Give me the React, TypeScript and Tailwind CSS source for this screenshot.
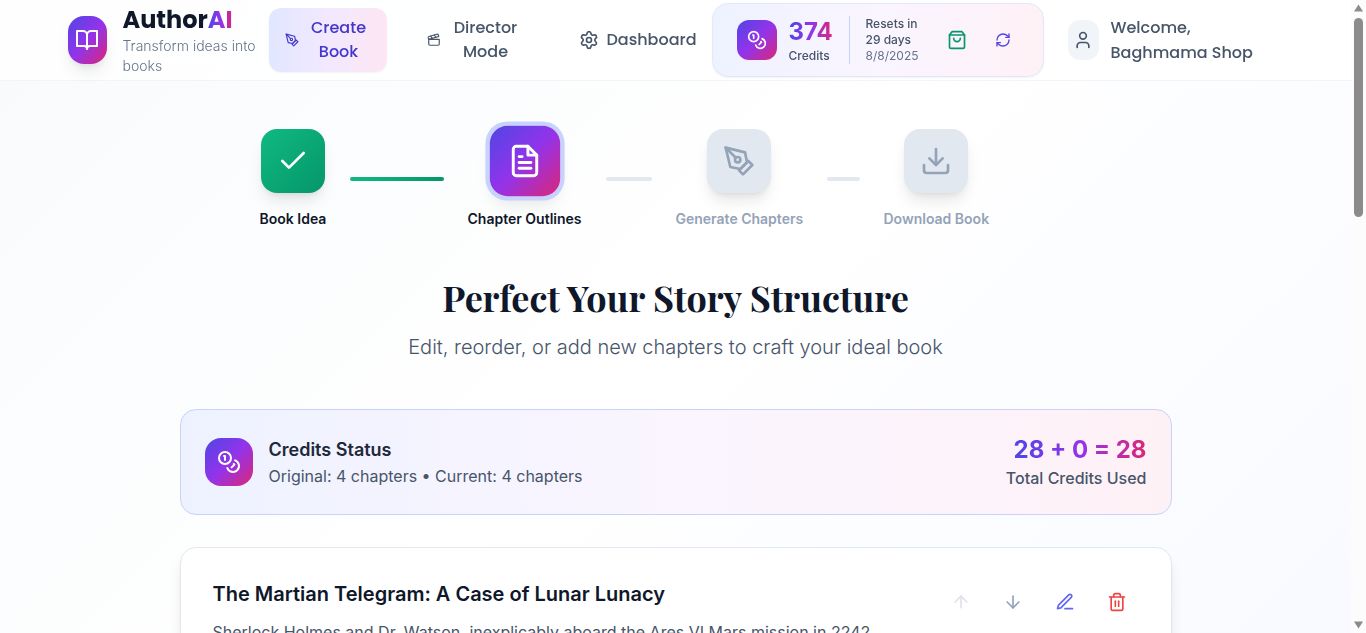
import { useState } from 'react'
import {
  ArrowDown,
  ArrowUp,
  Check,
  Clapperboard,
  RefreshCw,
  Settings,
  User,
} from 'lucide-react'
import { FiBookOpen, FiDownload, FiEdit3, FiFileText, FiPenTool, FiShoppingBag, FiTrash2 } from 'react-icons/fi'

const steps = [
  { id: 1, label: 'Book Idea', icon: Check },
  { id: 2, label: 'Chapter Outlines', icon: FiFileText },
  { id: 3, label: 'Generate Chapters', icon: FiPenTool },
  { id: 4, label: 'Download Book', icon: FiDownload },
]

const initialChapters = [
  {
    id: 'ch-1',
    title: 'The Martian Telegram: A Case of Lunar Lunacy',
    summary: 'Sherlock Holmes and Dr. Watson, inexplicably aboard the Ares VI Mars mission in 2242',
  },
]

function CoinsIcon({ className }: { className?: string }) {
  return (
    <svg
      viewBox="0 0 24 24"
      fill="none"
      stroke="currentColor"
      strokeWidth="2"
      strokeLinecap="round"
      strokeLinejoin="round"
      className={className}
    >
      <circle cx="8" cy="8" r="6" />
      <path d="M18.09 10.37A6 6 0 1 1 10.34 18" />
      <path d="M7 6h1v4" />
      <path d="m16.71 13.88.7.71-2.82 2.82" />
    </svg>
  )
}

function Header() {
  return (
    <header className="border-b border-slate-100 bg-white/80 backdrop-blur-xl">
      <div className="mx-auto flex h-20 max-w-7xl items-center px-8">
        <a href="#" className="flex w-[201px] shrink-0 items-center gap-4">
          <span className="flex h-12 w-[39px] shrink-0 items-center justify-center rounded-2xl bg-linear-to-br/srgb from-[#4f46e5] via-[#9333ea] to-[#db2777] text-white shadow-lg">
            <FiBookOpen className="size-6" />
          </span>
          <span>
            <span className="block font-['Poppins','Inter',sans-serif] text-2xl leading-8 font-bold text-[#0f172a]">
              Author
              <span className="bg-linear-to-r/srgb from-[#4f46e5] via-[#9333ea] to-[#db2777] bg-clip-text text-transparent">
                AI
              </span>
            </span>
            <span className="block text-sm font-light text-[#64748b]">Transform ideas into books</span>
          </span>
        </a>

        <nav className="flex shrink-0 gap-6 font-['Poppins','Inter',sans-serif] leading-6 font-medium text-[#475569]">
          <button className="flex w-[118px] items-center gap-2 rounded-xl bg-linear-to-r/srgb from-[#e0e7ff] via-[#f3e8ff] to-[#fce7f3] px-4 py-2 text-[#4338ca] shadow-xs">
            <FiPenTool className="h-5 w-[14px] shrink-0" />
            <span className="flex-1">Create Book</span>
          </button>
          <button className="flex w-32 items-center gap-2 px-4 py-2">
            <Clapperboard className="h-5 w-[14px] shrink-0" />
            <span className="flex-1">Director Mode</span>
          </button>
          <button className="flex w-[149px] items-center gap-2 px-4 py-2">
            <Settings className="size-5 shrink-0" />
            <span>Dashboard</span>
          </button>
        </nav>

        <div className="flex w-[332px] shrink-0 items-center rounded-2xl border border-[#e0e7ff] bg-linear-to-r/srgb from-[#eef2ff] via-[#faf5ff] to-[#fef1f6] px-6 py-3 shadow-xs">
          <span className="flex size-10 shrink-0 items-center justify-center rounded-xl bg-linear-to-br/srgb from-[#4f46e5] via-[#9333ea] to-[#db2777] text-white">
            <CoinsIcon className="size-5" />
          </span>
          <div className="ml-3 w-[61px] border-r border-[#c7d2fe]">
            <p className="w-fit bg-linear-to-r/srgb from-[#4f46e5] via-[#9333ea] to-[#db2777] bg-clip-text text-2xl font-bold text-transparent">
              374
            </p>
            <p className="text-xs font-medium text-[#475569]">Credits</p>
          </div>
          <div className="ml-4 w-[57px] text-xs text-[#64748b]">
            <p className="font-medium text-[#475569]">Resets in</p>
            <p className="font-medium text-[#475569]">29 days</p>
            <p>8/8/2025</p>
          </div>
          <button aria-label="Buy credits" className="ml-4 p-2 text-[#059669]">
            <FiShoppingBag className="size-5" />
          </button>
          <button aria-label="Refresh credits" className="ml-3 p-2 text-[#4f46e5]">
            <RefreshCw className="size-4" />
          </button>
        </div>

        <a href="#" className="ml-6 flex items-center gap-3">
          <span className="flex h-10 w-[31px] shrink-0 items-center justify-center rounded-xl bg-[#f1f5f9] text-[#475569]">
            <User className="size-5" />
          </span>
          <span className="font-['Poppins','Inter',sans-serif] leading-[25px] font-medium text-[#475569]">
            Welcome,
            <br />
            Baghmama Shop
          </span>
        </a>
      </div>
    </header>
  )
}

function Stepper({ current }: { current: number }) {
  const boxClass = (id: number) => {
    if (id < current) return 'bg-linear-to-br/srgb from-[#10b981] to-[#059669] text-white'
    if (id === current)
      return 'scale-110 bg-linear-to-br/srgb from-[#4f46e5] via-[#9333ea] to-[#db2777] text-white ring-4 ring-[#c7d2fe]'
    return 'bg-[#e2e8f0] text-[#94a3b8]'
  }

  return (
    <ol className="mx-auto grid max-w-4xl grid-cols-4 px-8">
      {steps.map((step) => (
        <li key={step.id} className="flex items-center">
          <div className="flex flex-col items-center">
            <span className={`flex size-16 items-center justify-center rounded-2xl shadow-lg ${boxClass(step.id)}`}>
              <step.icon className="size-8" />
            </span>
            <span
              className={`mt-4 text-sm font-semibold whitespace-nowrap ${
                step.id <= current ? 'text-[#0f172a]' : 'text-[#94a3b8]'
              }`}
            >
              {step.label}
            </span>
          </div>
          {step.id < steps.length && (
            <div
              className={`mx-6 h-1 flex-1 rounded-full ${
                step.id < current ? 'bg-linear-to-r/srgb from-[#10b981] to-[#059669]' : 'bg-[#e2e8f0]'
              }`}
            />
          )}
        </li>
      ))}
    </ol>
  )
}

function CreditsStatus({ original, current }: { original: number; current: number }) {
  return (
    <section className="flex items-center justify-between rounded-2xl border border-[#c7d2fe] bg-linear-to-r/srgb from-[#eef2ff] via-[#faf5ff] to-[#fef1f6] p-6">
      <div className="flex items-center gap-4">
        <span className="flex size-12 items-center justify-center rounded-2xl bg-linear-to-br/srgb from-[#4f46e5] via-[#9333ea] to-[#db2777] text-white">
          <CoinsIcon className="size-6" />
        </span>
        <div>
          <h3 className="text-lg font-semibold text-[#1e293b]">Credits Status</h3>
          <p className="text-[#475569]">
            Original: {original} chapters • Current: {current} chapters
          </p>
        </div>
      </div>
      <div className="text-right">
        <p className="ml-auto w-fit bg-linear-to-r/srgb from-[#4f46e5] via-[#9333ea] to-[#db2777] bg-clip-text text-2xl font-bold text-transparent">
          28 + 0 = 28
        </p>
        <p className="font-medium text-[#475569]">Total Credits Used</p>
      </div>
    </section>
  )
}

export default function App() {
  const [chapters, setChapters] = useState(initialChapters)

  const removeChapter = (id: string) => {
    setChapters(chapters.filter((c) => c.id !== id))
  }

  return (
    <div className="flex h-screen overflow-hidden font-['Inter',sans-serif]">
      <div className="min-w-0 flex-1 overflow-hidden bg-linear-135/srgb from-[#f8fafc] via-white to-[#f8faff]">
        <Header />

        <main className="mx-auto max-w-5xl px-4 pt-12">
          <Stepper current={2} />

          <div className="mt-12 mb-12 text-center">
            <h1 className="mb-4 font-['Playfair_Display','Liberation_Serif',serif] text-4xl font-bold text-[#0f172a]">
              Perfect Your Story Structure
            </h1>
            <p className="text-xl font-light text-[#475569]">
              Edit, reorder, or add new chapters to craft your ideal book
            </p>
          </div>

          <CreditsStatus original={4} current={4} />

          <div className="mt-8 space-y-6">
            {chapters.map((chapter, i) => (
              <article
                key={chapter.id}
                className="flex items-start justify-between rounded-2xl border border-[#e2e8f0] bg-white p-8 shadow-lg"
              >
                <div>
                  <h3 className="mb-3 text-xl font-semibold text-[#0f172a]">{chapter.title}</h3>
                  <p className="text-[#475569]">{chapter.summary}</p>
                </div>
                <div className="flex gap-2">
                  <button aria-label="Move up" disabled={i === 0} className="p-3 text-[#94a3b8] disabled:opacity-30">
                    <ArrowUp className="size-5" />
                  </button>
                  <button aria-label="Move down" className="p-3 text-[#94a3b8]">
                    <ArrowDown className="size-5" />
                  </button>
                  <button aria-label="Edit chapter" className="p-3 text-[#6366f1]">
                    <FiEdit3 className="size-5" />
                  </button>
                  <button
                    aria-label="Delete chapter"
                    onClick={() => removeChapter(chapter.id)}
                    className="p-3 text-[#ef4444]"
                  >
                    <FiTrash2 className="size-5" />
                  </button>
                </div>
              </article>
            ))}
          </div>
        </main>
      </div>

      {/* scrollbar */}
      <div aria-hidden="true" className="flex w-[15px] shrink-0 flex-col items-center bg-[#fcfcfc] py-1">
        <svg viewBox="0 0 9 8" className="h-2 w-[9px] fill-[#8b8b8b]">
          <path d="M4.5 0.5 9 7.5H0Z" />
        </svg>
        <div className="mt-[6px] h-[199px] w-[9px] rounded-full bg-[#8b8b8b]" />
        <svg viewBox="0 0 9 8" className="mt-auto h-2 w-[9px] fill-[#8b8b8b]">
          <path d="M4.5 7.5 0 0.5H9Z" />
        </svg>
      </div>
    </div>
  )
}
